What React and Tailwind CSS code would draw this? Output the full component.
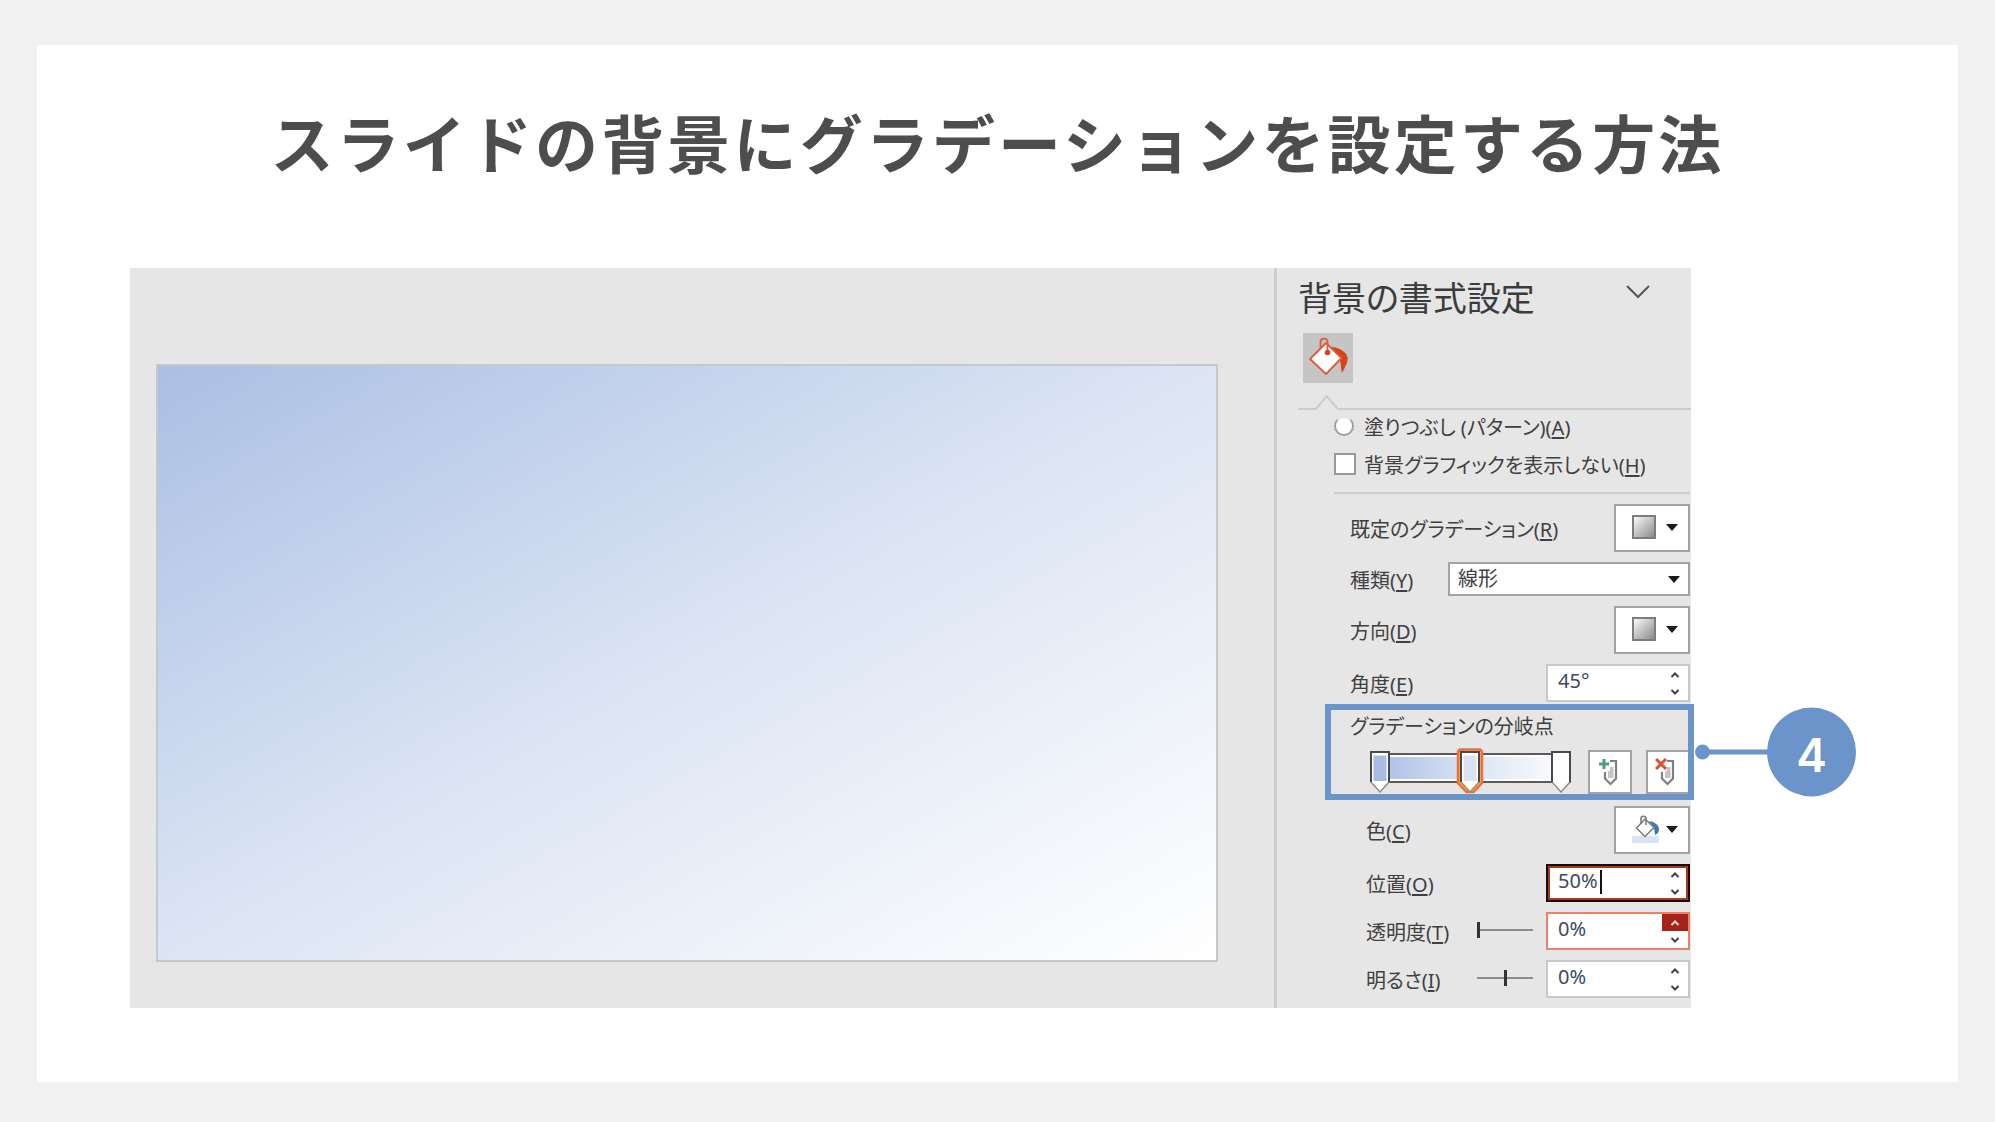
import React, { useState } from 'react';

const STOPS = [
  { id: 'start', color: '#a9bde4', pos: 'left-[-5px]' },
  { id: 'middle', color: '#dae3f3', pos: 'left-[85px]' },
  { id: 'end', color: '#ffffff', pos: 'left-[176px]' },
];

const SPIN_STYLES = {
  normal: 'border-2 border-[#c8c8c8]',
  focused: 'border-2 border-[#120c0b] inset-ring-2 inset-ring-[#a8381f]',
  hover: 'border-2 border-[#e9806c]',
};

function Triangle() {
  return (
    <svg viewBox="0 0 12 7" className="w-3 h-[7px] shrink-0" aria-hidden="true">
      <path d="M0 0h12L6 7z" fill="#1a1a1a" />
    </svg>
  );
}

function SpinArrow({ up, color = '#444444' }) {
  return (
    <svg viewBox="0 0 10 6" className="w-[10px] h-[6px]" aria-hidden="true">
      <path d={up ? 'M1.5 5L5 1.5 8.5 5' : 'M1.5 1L5 4.5 8.5 1'} fill="none" stroke={color} strokeWidth="2" />
    </svg>
  );
}

// 「種類(Y)」のようなアクセスキー付きラベル
function Label({ htmlFor, text, accessKey }) {
  return (
    <label htmlFor={htmlFor} className="pt-1 whitespace-nowrap">
      {text}(<span className="underline underline-offset-2">{accessKey}</span>)
    </label>
  );
}

function Row({ children, sub }) {
  return (
    <div className={`flex items-center justify-between ${sub ? 'pl-8' : 'pl-4'}`}>
      {children}
    </div>
  );
}

function DropButton({ id, children }) {
  return (
    <button id={id} type="button"
      className="w-[76px] h-12 shrink-0 flex items-center justify-between pl-4 pr-[10px] pb-[2px] bg-white border-2 border-[#a3a3a3]">
      {children}
      <Triangle />
    </button>
  );
}

function GradientSwatch() {
  return (
    <span className="w-6 h-6 border-2 border-[#7d7d7d] bg-linear-to-br from-[#fafafa] to-[#8c8c8c]" />
  );
}

function SpinBox({ id, initial, variant = 'normal', label }) {
  const [value, setValue] = useState(initial);
  const hover = variant === 'hover';
  return (
    <div className={`relative w-36 h-[38px] shrink-0 flex bg-white ${SPIN_STYLES[variant]}`}>
      <input id={id} type="text" value={value} onChange={(e) => setValue(e.target.value)}
        className="min-w-0 flex-1 pl-[10px] pb-1 bg-transparent text-[#3b4a5e] outline-none" />
      {variant === 'focused' && <span className="absolute left-[52px] top-1 w-[2px] h-6 bg-[#111111]" />}
      <div className="w-[26px] flex flex-col">
        <button type="button" aria-label={`${label} 上げる`}
          className={`flex-1 flex items-center justify-center ${hover ? 'bg-[#a62317]' : ''}`}>
          <SpinArrow up color={hover ? '#f7d9d3' : '#444444'} />
        </button>
        <button type="button" aria-label={`${label} 下げる`} className="flex-1 flex items-center justify-center">
          <SpinArrow />
        </button>
      </div>
    </div>
  );
}

function Slider({ initial, label }) {
  const [value, setValue] = useState(initial);
  return (
    <input type="range" min="0" max="100" value={value} aria-label={label}
      onChange={(e) => setValue(e.target.value)}
      className="w-14 h-4 ml-auto mr-[13px] mb-[2px] appearance-none bg-transparent [&::-webkit-slider-runnable-track]:h-[2px] [&::-webkit-slider-runnable-track]:bg-[#8c8c8c] [&::-webkit-slider-thumb]:appearance-none [&::-webkit-slider-thumb]:w-[3px] [&::-webkit-slider-thumb]:h-4 [&::-webkit-slider-thumb]:-mt-[7px] [&::-webkit-slider-thumb]:bg-[#333333]" />
  );
}

function StopHandle({ stop, active, onSelect }) {
  return (
    <button type="button" aria-label={`分岐点 ${stop.id}`} onClick={onSelect}
      className={`absolute -top-[3px] ${stop.pos}`}>
      <svg viewBox="0 0 28 47" className="block w-7 h-[47px]" aria-hidden="true">
        {active && (
          <path d="M4 2.500h20l2 2V36l-8.500 9h-7L2 36V4.500z" fill="#f2b25c" stroke="#f07038" strokeWidth="2.500" />
        )}
        <path d="M5 5h18v30l-9 10-9-10z" fill="#ffffff" stroke={active ? '#a08a68' : '#8c8c8c'} strokeWidth="1.500" />
        <path d="M5 35V5h18v30" fill="none" stroke="#4a4a4a" strokeWidth="2" />
        <path d="M7.500 8.500h13v25.500h-13z" fill={stop.color} />
      </svg>
    </button>
  );
}

function StopIcon({ remove }) {
  return (
    <svg viewBox="0 0 24 30" className="w-6 h-[30px]" aria-hidden="true">
      <path d="M12 10h3.500v11H10v-6l2-2z" fill="#c4c4c4" />
      <path d="M12 4h6v17.500L12.500 27 7 21.500V15" fill="none" stroke="#808080" strokeWidth="2.200" />
      {remove
        ? <path d="M1 2l10 10M11 2L1 12" stroke="#d9522f" strokeWidth="3" fill="none" />
        : <path d="M6 2v10M1 7h10" stroke="#4f9d81" strokeWidth="3" fill="none" />}
    </svg>
  );
}

function GradientStops() {
  const [active, setActive] = useState('middle');
  return (
    <div role="group" aria-labelledby="stops-label"
      className="relative h-24 mt-[2px] mb-[6px] -ml-[9px] -mr-1 border-6 border-[#6b95ca]">
      <p id="stops-label" className="h-8 leading-8 pt-px pl-[19px]">グラデーションの分岐点</p>
      <div className="flex pt-2 pl-10">
        <div className="relative w-[200px] h-11 mr-[17px]">
          <div className="h-[30px] mt-[3px] border-2 border-[#5a5a5a] bg-white py-[2px]">
            <div className="h-full bg-linear-to-r from-[#a9bde4] via-[#dae3f3] to-white" />
          </div>
          {STOPS.map((s) => (
            <StopHandle key={s.id} stop={s} active={active === s.id} onSelect={() => setActive(s.id)} />
          ))}
        </div>
        <button type="button" aria-label="分岐点を追加"
          className="w-11 h-11 mr-[14px] flex items-center justify-center bg-white border-2 border-[#a3a3a3]">
          <StopIcon />
        </button>
        <button type="button" aria-label="分岐点を削除"
          className="flex-1 h-11 flex items-center pl-[7px] bg-white border-2 border-r-0 border-[#a3a3a3]">
          <StopIcon remove />
        </button>
      </div>

      {/* Step callout */}
      <div className="absolute left-full top-1/2 -translate-y-1/2 ml-[7px] flex items-center">
        <span className="w-[15px] h-[15px] rounded-full bg-[#6b95ca]" />
        <span className="w-[59px] h-[5px] -ml-px bg-[#6b95ca]" />
        <span className="w-[89px] h-[89px] -ml-px rounded-full bg-[#6b95ca] flex items-center justify-center pt-1 text-white text-[46px] leading-none font-semibold font-['Inter',sans-serif]">
          4
        </span>
      </div>
    </div>
  );
}

function FormatPane() {
  return (
    <aside className="w-[417px] shrink-0 border-l-3 border-[#cdcdcd] text-xl leading-6 text-[#404040]">
      {/* Pane header */}
      <div className="flex items-start justify-between pt-[11px] pl-[21px] pr-[41px]">
        <h2 className="text-[34px] leading-[38px] text-[#3c3c3c]">背景の書式設定</h2>
        <button type="button" aria-label="作業ウィンドウのオプション" className="mt-[6px]">
          <svg viewBox="0 0 24 14" className="w-6 h-[14px]" aria-hidden="true">
            <path d="M1 1l11 11L23 1" fill="none" stroke="#555555" strokeWidth="2" />
          </svg>
        </button>
      </div>
      <button type="button" aria-label="塗りつぶし"
        className="w-[50px] h-[50px] mt-4 ml-[26px] flex items-center justify-center bg-[#c5c5c5]">
        <svg viewBox="0 0 50 50" className="w-[50px] h-[50px]" aria-hidden="true">
          <path d="M28 14c6 0 12 3 15 7 3 5 2 8-4 19-1-4-1-8-2-14z" fill="#d5431f" />
          <path d="M23 10l15.500 15L23 41 7 26z" fill="#ffffff" stroke="#dc5c3d" strokeWidth="1.800" strokeLinejoin="round" />
          <path d="M17.500 15V9c0-4.500 7-4.500 7 0v10" fill="none" stroke="#dc5c3d" strokeWidth="1.800" />
          <circle cx="24.500" cy="19.500" r="2.800" fill="#d5431f" />
        </svg>
      </button>
      <div className="flex items-end pl-[21px] mt-3">
        <span className="w-[18px] h-[2px] bg-[#cccccc]" />
        <svg viewBox="0 0 22 15" className="w-[22px] h-[15px]" aria-hidden="true">
          <path d="M0 14L10.500 1 22 14" fill="none" stroke="#cccccc" strokeWidth="2" />
        </svg>
        <span className="flex-1 h-[2px] bg-[#cccccc]" />
      </div>

      {/* Fill options */}
      <div className="pl-[57px] pr-px pt-1">
        <div className="flex items-center h-6">
          <input id="fill-pattern" type="radio" name="fill"
            className="w-5 h-5 mr-[10px] appearance-none rounded-full bg-white border-2 border-[#a0a0a0] border-t-[#e6e6e6]" />
          <Label htmlFor="fill-pattern" text="塗りつぶし (パターン)" accessKey="A" />
        </div>
        <div className="flex items-center h-6 mt-[14px]">
          <input id="hide-graphics" type="checkbox"
            className="w-[22px] h-[22px] mr-2 appearance-none bg-white border-2 border-[#989898]" />
          <Label htmlFor="hide-graphics" text="背景グラフィックを表示しない" accessKey="H" />
        </div>
        <hr className="mt-4 mb-[10px] border-t-2 border-[#cccccc]" />

        <div className="flex flex-col gap-[10px]">
          <Row>
            <Label htmlFor="preset" text="既定のグラデーション" accessKey="R" />
            <DropButton id="preset"><GradientSwatch /></DropButton>
          </Row>
          <Row>
            <Label htmlFor="type" text="種類" accessKey="Y" />
            <div className="relative">
              <select id="type"
                className="block w-[242px] h-[34px] pl-2 appearance-none rounded-none bg-white border-2 border-[#a3a3a3] outline-none">
                <option>線形</option>
              </select>
              <span className="absolute right-[10px] top-[14px] pointer-events-none"><Triangle /></span>
            </div>
          </Row>
          <Row>
            <Label htmlFor="direction" text="方向" accessKey="D" />
            <DropButton id="direction"><GradientSwatch /></DropButton>
          </Row>
          <Row>
            <Label htmlFor="angle" text="角度" accessKey="E" />
            <SpinBox id="angle" initial="45°" label="角度" />
          </Row>
        </div>

        <GradientStops />

        <div className="flex flex-col gap-[10px] pb-[10px]">
          <Row sub>
            <Label htmlFor="color" text="色" accessKey="C" />
            <DropButton id="color">
              <svg viewBox="0 0 28 28" className="w-7 h-7" aria-hidden="true">
                <path d="M0 21h27v7H0z" fill="#dae3f3" />
                <path d="M17 6c6 1 10 4 10 8 0 3-1 5-4 6l-1-7z" fill="#3f78b5" />
                <path d="M13 4l9 8.500-9 9-8.500-8.500z" fill="#ffffff" stroke="#7a7a7a" strokeWidth="1.500" />
                <path d="M9 9V3c0-2.500 5-2.500 5 0v7" fill="none" stroke="#7a7a7a" strokeWidth="1.500" />
              </svg>
            </DropButton>
          </Row>
          <Row sub>
            <Label htmlFor="position" text="位置" accessKey="O" />
            <SpinBox id="position" initial="50%" variant="focused" label="位置" />
          </Row>
          <Row sub>
            <Label htmlFor="transparency" text="透明度" accessKey="T" />
            <Slider initial={0} label="透明度" />
            <SpinBox id="transparency" initial="0%" variant="hover" label="透明度" />
          </Row>
          <Row sub>
            <Label htmlFor="brightness" text="明るさ" accessKey="I" />
            <Slider initial={50} label="明るさ" />
            <SpinBox id="brightness" initial="0%" label="明るさ" />
          </Row>
        </div>
      </div>
    </aside>
  );
}

export default function App() {
  return (
    <div className="min-h-screen bg-[#f1f1f1] px-[37px] pt-[45px] pb-[39px] font-['Noto_Sans','Noto_Sans_CJK_JP',sans-serif]">
      <main className="bg-white pt-14 pb-[74px] pl-[93px] pr-[267px]">
        <h1 className="-mr-[174px] mb-[87px] text-center whitespace-nowrap text-[63px] leading-[80px] font-bold tracking-wider text-[#4d4d4d] font-['Noto_Sans_CJK_JP',sans-serif]">
          スライドの背景にグラデーションを設定する方法
        </h1>

        <div className="flex bg-[#e6e6e6] [font-feature-settings:'palt']">
          <section className="flex-1 flex pt-24 pb-[46px] pl-[26px] pr-[56px]">
            <div className="flex-1 border-2 border-[#c8c8c8] bg-linear-[to_bottom_right,#abbfe4,#dce5f4_50%,#ffffff]" />
          </section>
          <FormatPane />
        </div>
      </main>
    </div>
  );
}
